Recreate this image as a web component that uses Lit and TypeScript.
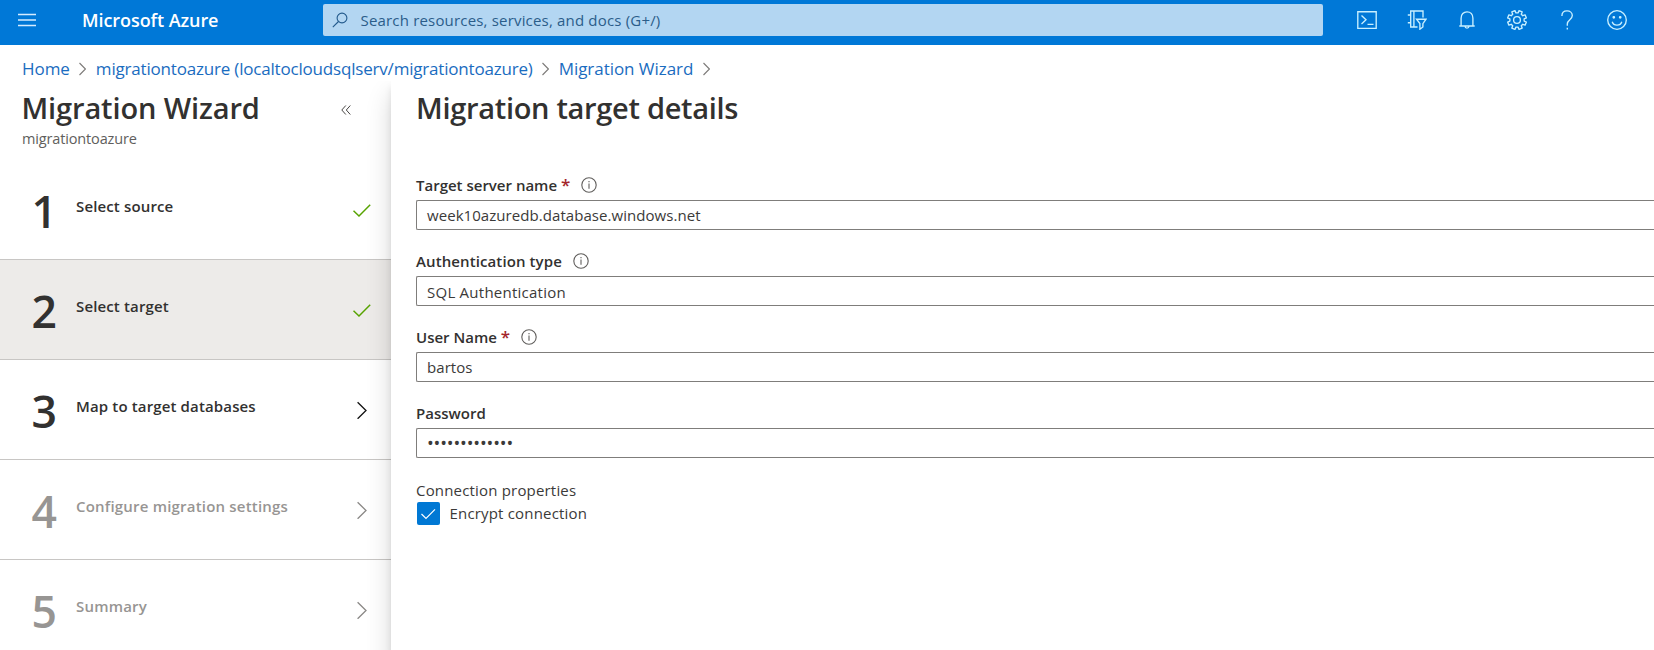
import { LitElement, html, svg, css, nothing } from "lit";
import { customElement, property } from "lit/decorators.js";
import { classMap } from "lit/directives/class-map.js";

type StepState = "done" | "next" | "disabled";

interface Step {
  label: string;
  state: StepState;
  current?: boolean;
}

interface Field {
  label: string;
  value: string;
  required?: boolean;
  info?: boolean;
  kind?: "select" | "password";
}

const STEPS: Step[] = [
  { label: "Select source", state: "done" },
  { label: "Select target", state: "done", current: true },
  { label: "Map to target databases", state: "next" },
  { label: "Configure migration settings", state: "disabled" },
  { label: "Summary", state: "disabled" },
];

const FIELDS: Field[] = [
  { label: "Target server name", value: "week10azuredb.database.windows.net", required: true, info: true },
  { label: "Authentication type", value: "SQL Authentication", info: true, kind: "select" },
  { label: "User Name", value: "bartos", required: true, info: true },
  { label: "Password", value: "•••••••••••••", kind: "password" },
];

/** Gear outline with eight teeth, centred on 10,10. */
function gearPath(): string {
  const points: string[] = [];
  for (let i = 0; i < 8; i++) {
    const base = i * 45;
    for (const [offset, radius] of [[-14, 7.2], [-10, 9.6], [10, 9.6], [14, 7.2]]) {
      const angle = ((base + offset + 22.5) * Math.PI) / 180;
      points.push(`${(10 + radius * Math.sin(angle)).toFixed(2)} ${(10 - radius * Math.cos(angle)).toFixed(2)}`);
    }
  }
  return `M${points.join("L")}Z`;
}

const ICONS = {
  shell: svg`<path d="M.8 1.7H19.2V18.3H.8Z"/><path d="M4.5 5.5L9 9.8L4.5 14M10.5 14.3H16.5"/>`,
  directory: svg`<path d="M10.5 17H3.7V1H16V7.5M6.9 1V17M.8 5H3.7M.8 12.7H3.7"/><path d="M9.5 9.2H19L15.9 13.6V17L12.9 19.2V13.6Z"/>`,
  bell: svg`<path d="M2.3 16H17.7M4.1 16V8.2C4.1 4.4 6.6 1.8 10 1.8S15.9 4.4 15.9 8.2V16M8 16.3C8.2 18.8 11.8 18.8 12 16.3"/>`,
  gear: svg`<path d=${gearPath()} stroke-linejoin="round"/><circle cx="10" cy="10" r="3.4"/>`,
  help: svg`<path d="M4.9 5.9C4.9 2.7 7.2.9 10 .9C13 .9 15.3 2.8 15.3 5.6C15.3 9.8 10.3 9.7 10.3 14V15.7M10.3 17.8V19.6"/>`,
  smile: svg`<circle cx="10" cy="10" r="9.3"/><path d="M5.2 11.8C6.6 16.3 13.4 16.3 14.8 11.8"/><circle class="dot" cx="6.8" cy="7.3" r=".7"/><circle class="dot" cx="13.2" cy="7.3" r=".7"/>`,
};

@customElement("portal-header")
class PortalHeader extends LitElement {
  static styles = css`
    :host {
      display: flex;
      align-items: center;
      box-sizing: border-box;
      height: 45px;
      padding: 0 27px 5px 18px;
      background: #0078d7;
      color: #fff;
    }
    .menu { width: 18px; height: 14px; stroke: #d5ecff; stroke-width: 1.3; }
    .brand {
      width: 241px;
      margin-left: 46px;
      font-size: 18px;
      font-weight: 600;
      letter-spacing: -0.07px;
      line-height: 24px;
      white-space: nowrap;
    }
    .search {
      display: flex;
      align-items: center;
      box-sizing: border-box;
      width: 1000px;
      height: 32px;
      padding-left: 9px;
      gap: 12.5px;
      border-radius: 2px;
      background: #b3d6f2;
      color: #2b5d8a;
      font-size: 15px;
      letter-spacing: 0.18px;
      white-space: nowrap;
    }
    .glass { width: 16px; height: 16px; fill: none; stroke: #235a8c; stroke-width: 1.1; }
    .tools { display: flex; gap: 30px; margin-left: auto; }
    .tool { width: 20px; height: 20px; fill: none; stroke: #c9f0ff; stroke-width: 1.35; }
    .dot { fill: #c9f0ff; }
  `;

  render() {
    return html`
      <svg class="menu" viewBox="0 0 18 14"><path d="M0 1.5H18M0 7H18M0 12.5H18" /></svg>
      <div class="brand">Microsoft Azure</div>
      <div class="search">
        <svg class="glass" viewBox="0 0 16 16"><circle cx="10" cy="6" r="4.9" /><path d="M6.5 9.5L.8 15.2" /></svg>
        <span>Search resources, services, and docs (G+/)</span>
      </div>
      <div class="tools">
        ${Object.values(ICONS).map((icon) => html`<svg class="tool" viewBox="0 0 20 20">${icon}</svg>`)}
      </div>
    `;
  }
}

@customElement("portal-breadcrumb")
class PortalBreadcrumb extends LitElement {
  static styles = css`
    :host {
      display: flex;
      align-items: center;
      gap: 9.5px;
      box-sizing: border-box;
      height: 46px;
      padding: 1px 0 0 22px;
      color: #1a6cc0;
      font-size: 17px;
      white-space: nowrap;
    }
    .crumb { line-height: 24px; letter-spacing: -0.05px; }
    .long { letter-spacing: -0.19px; }
    .sep { width: 7px; height: 14px; fill: none; stroke: #7d7b79; stroke-width: 1.1; }
  `;

  render() {
    const sep = html`<svg class="sep" viewBox="0 0 7 14"><path d="M.5 1L6.4 7L.5 13" /></svg>`;
    return html`
      <span class="crumb">Home</span>${sep}
      <span class="crumb long">migrationtoazure (localtocloudsqlserv/migrationtoazure)</span>${sep}
      <span class="crumb">Migration Wizard</span>${sep}
    `;
  }
}

@customElement("wizard-step")
class WizardStep extends LitElement {
  @property({ attribute: false }) step!: Step;
  @property({ type: Number }) number = 1;

  static styles = css`
    :host { display: block; }
    .row {
      display: grid;
      grid-template-columns: 44.5px 1fr 18px;
      align-items: center;
      box-sizing: border-box;
      height: 100px;
      padding: 0 20.5px 0 31.5px;
      border-bottom: 1px solid #c8c6c4;
      color: #323130;
    }
    .current { background: #edebe9; }
    .disabled { color: #979593; }
    .num { padding-top: 2px; font-size: 44.5px; font-weight: 600; line-height: 50px; }
    .label {
      padding-bottom: 7px;
      font-size: 15px;
      font-weight: 600;
      letter-spacing: 0.14px;
      line-height: 20px;
      white-space: nowrap;
    }
    .disabled .label { letter-spacing: 0.2px; }
    .mark { width: 18px; height: 18px; fill: none; stroke: #111; stroke-width: 1.3; }
    .done .mark { stroke: #57a300; stroke-width: 1.5; }
    .disabled .mark { stroke: #8a8886; }
  `;

  render() {
    const { label, state, current } = this.step;
    const path = state === "done" ? "M.5 9.7L6 15L17.2 3.8" : "M4.6 1.2L13 9.5L4.6 17.8";
    return html`
      <div class=${classMap({ row: true, [state]: true, current: !!current })}>
        <span class="num">${this.number}</span>
        <span class="label">${label}</span>
        <svg class="mark" viewBox="0 0 18 18"><path d=${path} /></svg>
      </div>
    `;
  }
}

@customElement("form-field")
class FormField extends LitElement {
  @property({ attribute: false }) field!: Field;

  static styles = css`
    :host { display: block; }
    .head {
      display: flex;
      align-items: center;
      height: 20px;
      margin-bottom: 5px;
      color: #323130;
      font-size: 15px;
      font-weight: 600;
      line-height: 20px;
      white-space: nowrap;
    }
    .label-select { letter-spacing: 0.1px; }
    .star { margin-left: 4px; color: #a4262c; font-size: 17px; }
    .info { width: 16px; height: 16px; margin-left: 11px; fill: none; stroke: #605e5c; stroke-width: 1.1; }
    .box {
      box-sizing: border-box;
      height: 30px;
      padding-left: 10px;
      border: 1px solid #7f7d7b;
      border-right: 0;
      border-radius: 2px 0 0 2px;
      color: #3b3a39;
      font-size: 15px;
      line-height: 28px;
      letter-spacing: 0.06px;
    }
    .select { padding-top: 1px; letter-spacing: 0.25px; }
    .password { font-size: 18px; letter-spacing: -0.15px; }
  `;

  render() {
    const { label, value, required, info, kind } = this.field;
    return html`
      <div class="head">
        <span class="label-${kind ?? "text"}">${label}</span>
        ${required ? html`<span class="star">*</span>` : nothing}
        ${info
          ? html`<svg class="info" viewBox="0 0 16 16"><circle cx="8" cy="8" r="7.2" /><path d="M8 6.4V11.8M8 4V5.2" /></svg>`
          : nothing}
      </div>
      <div class="box ${kind ?? ""}">${value}</div>
    `;
  }
}

@customElement("app-root")
class AppRoot extends LitElement {
  static styles = css`
    :host {
      display: flex;
      flex-direction: column;
      height: 650px;
      overflow: hidden;
      background: #fff;
      color: #323130;
      font-family: "Open Sans", "Noto Sans", sans-serif;
    }
    .body { display: grid; grid-template-columns: 391px 1fr; flex: 1; min-height: 0; }
    .side { min-width: 0; }
    .top { display: flex; align-items: center; justify-content: space-between; padding: 0 40px 0 21.5px; }
    .title {
      margin: 0;
      font-size: 29px;
      font-weight: 600;
      letter-spacing: -0.12px;
      line-height: 34px;
      white-space: nowrap;
    }
    .main .title { letter-spacing: -0.3px; }
    .collapse { width: 10px; height: 10px; margin-top: 4px; fill: none; stroke: #484644; stroke-width: 1; }
    .sub {
      margin: 4px 0 11px 22px;
      color: #605e5c;
      font-size: 14.5px;
      letter-spacing: -0.15px;
      line-height: 20px;
    }
    .main {
      position: relative;
      margin-top: -10px;
      padding: 10px 0 0 25px;
      background: #fff;
      box-shadow: 0 14px 24px rgba(0, 0, 0, 0.16), 0 6px 7px rgba(0, 0, 0, 0.09);
      clip-path: inset(0 0 0 -30px);
    }
    .form { display: flex; flex-direction: column; gap: 21px; margin-top: 50px; }
    .props { margin-top: 1px; font-size: 15px; line-height: 20px; letter-spacing: 0.18px; color: #3b3a39; }
    .check { display: flex; align-items: center; gap: 9.5px; padding: 2px 0 0 1px; }
    .check-label { padding-bottom: 2px; }
    .tick { width: 23px; height: 23px; border-radius: 2px; background: #0078d4; fill: none; stroke: #fff; stroke-width: 1.2; }
  `;

  render() {
    return html`
      <portal-header></portal-header>
      <portal-breadcrumb></portal-breadcrumb>
      <div class="body">
        <div class="side">
          <div class="top">
            <h1 class="title">Migration Wizard</h1>
            <svg class="collapse" viewBox="0 0 10 10"><path d="M4.8 .5L.8 5L4.8 9.5M9.3 .5L5.3 5L9.3 9.5" /></svg>
          </div>
          <div class="sub">migrationtoazure</div>
          ${STEPS.map((step, i) => html`<wizard-step .step=${step} .number=${i + 1}></wizard-step>`)}
        </div>
        <div class="main">
          <h2 class="title">Migration target details</h2>
          <div class="form">
            ${FIELDS.map((field) => html`<form-field .field=${field}></form-field>`)}
            <div class="props">
              <div>Connection properties</div>
              <div class="check">
                <svg class="tick" viewBox="0 0 23 23"><path d="M4.5 12L9 16.5L18 7.3" /></svg>
                <span class="check-label">Encrypt connection</span>
              </div>
            </div>
          </div>
        </div>
      </div>
    `;
  }
}
